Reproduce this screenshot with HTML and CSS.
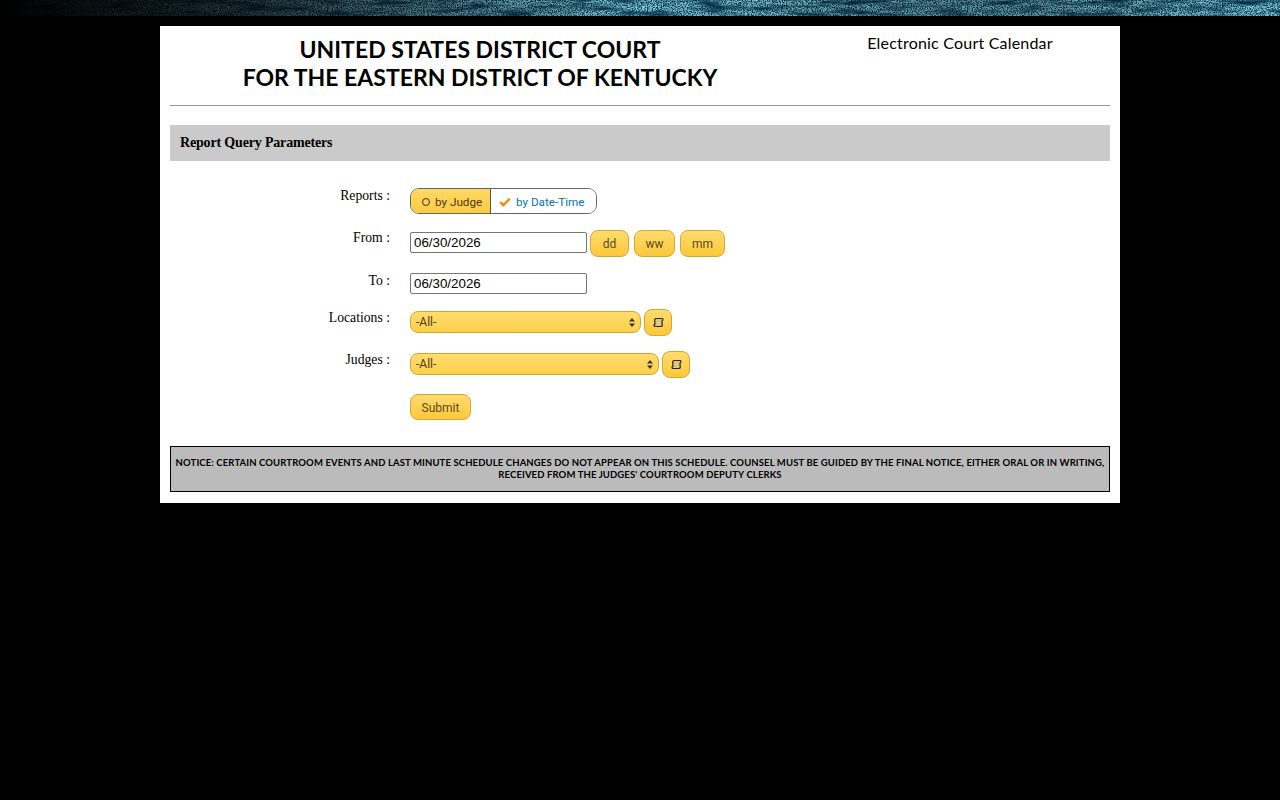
FILE: index.html
```html
<!DOCTYPE html>
<html lang="en">
<head>
<meta charset="utf-8">
<title>Electronic Court Calendar</title>
<link rel="stylesheet" href="styles.css">
</head>
<body>
<div class="banner">
  <svg class="banner-art" width="1280" height="16" xmlns="http://www.w3.org/2000/svg" aria-hidden="true">
    <defs>
      <filter id="grain" x="0" y="0" width="100%" height="100%">
        <feTurbulence type="fractalNoise" baseFrequency="0.8" numOctaves="3" seed="7"/>
        <feColorMatrix type="matrix" values="0 0 0 0 0.24  0 0 0 0 0.62  0 0 0 0 0.74  2.8 2.8 0 0 -2.2"/>
      </filter>
      <filter id="blotch" x="0" y="0" width="100%" height="100%">
        <feTurbulence type="fractalNoise" baseFrequency="0.03 0.18" numOctaves="3" seed="11"/>
        <feColorMatrix type="matrix" values="0 0 0 0 0  0 0 0 0 0.03  0 0 0 0 0.07  2.4 0 0 0 -1"/>
      </filter>
      <linearGradient id="fade" x1="0" x2="1" y1="0" y2="0">
        <stop offset="0" stop-color="#000"/>
        <stop offset="0.04" stop-color="#111"/>
        <stop offset="0.2" stop-color="#484848"/>
        <stop offset="0.34" stop-color="#999"/>
        <stop offset="0.5" stop-color="#fff"/>
        <stop offset="0.72" stop-color="#bbb"/>
        <stop offset="0.82" stop-color="#bbb"/>
        <stop offset="1" stop-color="#fff"/>
      </linearGradient>
      <mask id="fade-mask"><rect width="1280" height="16" fill="url(#fade)"/></mask>
    </defs>
    <g mask="url(#fade-mask)">
      <rect width="1280" height="16" fill="#0c3a52"/>
      <rect width="1280" height="16" filter="url(#grain)"/>
      <rect width="1280" height="16" filter="url(#blotch)"/>
    </g>
  </svg>
</div>
<main class="panel">
  <header class="masthead">
    <h1 class="court">UNITED STATES DISTRICT COURT<br>FOR THE EASTERN DISTRICT OF KENTUCKY</h1>
    <div class="app-name">Electronic Court Calendar</div>
  </header>
  <hr class="rule">
  <h2 class="band">Report Query Parameters</h2>
  <form class="query">
    <div class="row row-reports">
      <label class="lbl">Reports :</label>
      <div class="ctl">
        <div class="toggle">
          <span class="seg seg-on"><span class="ring"></span>by Judge</span>
          <span class="seg seg-off">
            <svg class="check" width="12" height="10" viewBox="0 0 12 10" aria-hidden="true"><path d="M1.2 5.2 4.3 8.2 10.8 1.6" fill="none" stroke="#e8920f" stroke-width="2.4"/></svg>by Date-Time</span>
        </div>
      </div>
    </div>
    <div class="row row-from">
      <label class="lbl">From :</label>
      <div class="ctl">
        <input class="date date-from" type="text" value="06/30/2026">
        <button class="btn btn-dd" type="button">dd</button>
        <button class="btn btn-ww" type="button">ww</button>
        <button class="btn btn-mm" type="button">mm</button>
      </div>
    </div>
    <div class="row row-to">
      <label class="lbl">To :</label>
      <div class="ctl"><input class="date" type="text" value="06/30/2026"></div>
    </div>
    <div class="row row-loc">
      <label class="lbl">Locations :</label>
      <div class="ctl">
        <div class="pick pick-loc">-All-<svg class="updown" width="6" height="9" viewBox="0 0 6 9" aria-hidden="true"><path d="M3 0 6 3.4H0ZM0 5.6H6L3 9Z" fill="#333"/></svg></div>
        <button class="btn btn-scroll" type="button"><svg width="11" height="11" viewBox="0 0 11 11" aria-hidden="true"><path d="M3 1.500H9C10.200 1.500 10.400 3.200 9.200 3.600 8.900 5 9 6.500 9.300 7.200 9.300 8.800 8.500 9.500 7.800 9.500H2C.8 9.500.6 7.600 1.900 7.400 2 5.800 1.900 4.600 1.700 3.400 1.500 2.400 2.100 1.500 3 1.500Z" fill="#dcc57c" stroke="#2e2610" stroke-width="1.200"/></svg></button>
      </div>
    </div>
    <div class="row row-jud">
      <label class="lbl">Judges :</label>
      <div class="ctl">
        <div class="pick pick-jud">-All-<svg class="updown" width="6" height="9" viewBox="0 0 6 9" aria-hidden="true"><path d="M3 0 6 3.4H0ZM0 5.6H6L3 9Z" fill="#333"/></svg></div>
        <button class="btn btn-scroll" type="button"><svg width="11" height="11" viewBox="0 0 11 11" aria-hidden="true"><path d="M3 1.500H9C10.200 1.500 10.400 3.200 9.200 3.600 8.900 5 9 6.500 9.300 7.200 9.300 8.800 8.500 9.500 7.800 9.500H2C.8 9.500.6 7.600 1.900 7.400 2 5.800 1.900 4.600 1.700 3.400 1.500 2.400 2.100 1.500 3 1.500Z" fill="#dcc57c" stroke="#2e2610" stroke-width="1.200"/></svg></button>
      </div>
    </div>
    <div class="row row-sub">
      <span class="lbl"></span>
      <div class="ctl"><button class="btn btn-submit" type="button">Submit</button></div>
    </div>
  </form>
  <p class="notice">NOTICE: CERTAIN COURTROOM EVENTS AND LAST MINUTE SCHEDULE CHANGES DO NOT APPEAR ON THIS SCHEDULE. COUNSEL MUST BE GUIDED BY THE FINAL NOTICE, EITHER ORAL OR IN WRITING, RECEIVED FROM THE JUDGES' COURTROOM DEPUTY CLERKS</p>
</main>
</body>
</html>
```
FILE: styles.css
```css
* { box-sizing: border-box; }
html, body { margin: 0; padding: 0; background: #000; }
body { height: 800px; overflow: hidden; font-family: "Liberation Serif", serif; }
.banner { height: 16px; overflow: hidden; background: #000; }
.banner-art { display: block; }
.panel { width: 960px; height: 477px; margin: 10px auto 0; padding: 0 10px; background: #fff; }
.masthead { display: flex; height: 79px; }
.court { width: 620px; margin: 9px 0 0; font: 700 23px/28px Lato, sans-serif; letter-spacing: 0; text-align: center; color: #000; }
.app-name { flex: 1; margin-top: 7px; padding-left: 20px; font: 400 16px/20px Lato, sans-serif; letter-spacing: .2px; text-align: center; color: #000; }
.rule { height: 1px; margin: 0 0 19px; border: 0; background: #999; }
.band { height: 36px; margin: 0; padding: 0 10px; font: 700 14px/36px "Liberation Serif", serif; letter-spacing: -.17px; background: #cacaca; color: #000; }
.query { height: 285px; padding-top: 27px; }
.row { display: flex; }
.row-reports { height: 42px; }
.row-from { height: 43px; }
.row-to { height: 37px; }
.row-loc { height: 42px; }
.row-jud { height: 42px; }
.lbl { width: 220px; font-size: 13.7px; line-height: 16px; text-align: right; color: #000; }
.ctl { display: flex; align-items: flex-start; margin-left: 20px; }
.toggle { display: flex; height: 26px; border: 1px solid #666; border-radius: 9px; overflow: hidden; font: 400 11.7px/24px Roboto, sans-serif; }
.seg { display: flex; align-items: center; padding-top: 1px; white-space: nowrap; }
.seg-on { width: 80px; padding-left: 11px; background: linear-gradient(#ffd865, #fdcb42); color: #4a3b10; border-right: 1px solid #555; }
.seg-off { width: 105px; padding-left: 8px; background: #fff; color: #0a72b0; }
.ring { width: 8px; height: 8px; margin-right: 5px; border: 1.500px solid #3a3010; border-radius: 50%; }
.check { margin-right: 5px; }
.date { width: 177px; height: 21px; margin: 0; padding: 0 3px; border: 1px solid #767676; border-radius: 2px; font: 400 13.333px "Liberation Sans", sans-serif; color: #000; background: #fff; }
.date-from { margin-top: 2px; }
.btn { display: inline-flex; align-items: center; justify-content: center; padding: 0; border: 1px solid #d8a52e; border-radius: 8px; background: linear-gradient(#ffdc6e, #fdc83a); font: 400 12px Roboto, sans-serif; color: #5a4a20; }
.btn-dd { width: 39px; height: 27px; margin-left: 3px; }
.btn-ww { width: 41px; height: 27px; margin-left: 5px; }
.btn-mm { width: 45px; height: 27px; margin-left: 5px; }
.btn-scroll { width: 28px; height: 27px; margin: -1px 0 0 3px; }
.btn-submit { width: 61px; height: 26px; padding-top: 1px; }
.pick { display: flex; align-items: center; justify-content: space-between; height: 22px; margin-top: 1px; padding: 0 5px; border: 1px solid #d8a52e; border-radius: 8px; background: linear-gradient(#ffdc6e, #fdd04a); font: 400 12px Roboto, sans-serif; color: #4a3b10; }
.pick-loc { width: 231px; }
.pick-jud { width: 249px; }
.notice { display: flex; align-items: center; justify-content: center; height: 46px; margin: 0; padding: 0 3px; border: 1px solid #000; background: #bbb; font: 700 9.5px/12px Lato, sans-serif; letter-spacing: .12px; text-align: center; color: #000; }
```
